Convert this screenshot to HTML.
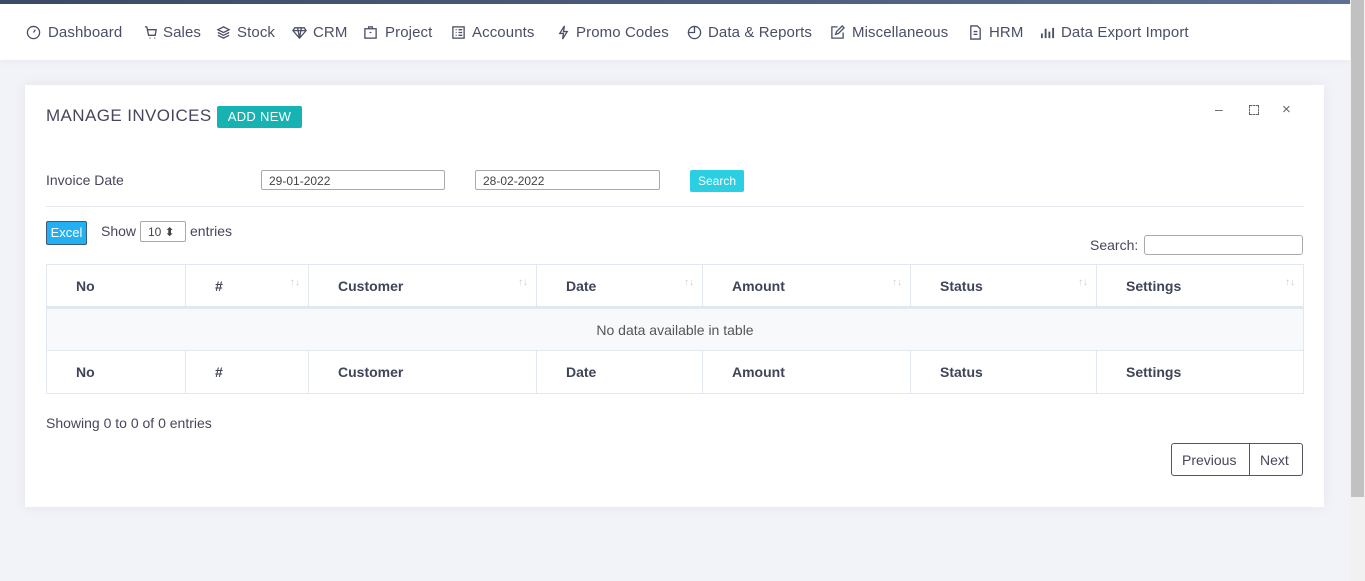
<!DOCTYPE html>
<html><head><style>
*{box-sizing:border-box;margin:0;padding:0}
body{width:1365px;height:581px;overflow:hidden;background:#f2f3f8;font-family:"Liberation Sans",sans-serif;color:#48465b;position:relative}
.top{position:absolute;left:0;top:0;width:1350px;height:4px;background:linear-gradient(90deg,#3d4a63,#5e6f94)}
.nav{position:absolute;left:0;top:4px;width:1350px;height:56px;background:#fff;box-shadow:0 2px 8px rgba(0,0,0,.04)}
.nav span{position:absolute;top:20px;font-size:15px;letter-spacing:.1px;color:#4a4f66;white-space:nowrap}
.nav svg{position:absolute;top:21px;width:15px;height:15px;fill:none;stroke:#4a4f66;stroke-width:1.4}
.sb{position:absolute;left:1350px;top:0;width:15px;height:581px;background:#f1f1f1}
.sb div{position:absolute;left:1px;top:0;width:13px;height:497px;background:#c1c1c1}
.card{position:absolute;left:25px;top:85px;width:1299px;height:422px;background:#fff;box-shadow:0 0 12px rgba(80,80,120,.08)}
.abs{position:absolute;white-space:nowrap}
.inp{position:absolute;height:20px;border:1px solid #a9a9a9;border-radius:2px;font-size:12px;padding:3px 7px;color:#444}
table{position:absolute;left:21px;top:179px;width:1258px;border-collapse:collapse;font-size:14px}
td{border:1px solid #e2e8f0;height:43px;font-weight:bold;color:#3f4458;padding-left:29px;position:relative}
.ar{position:absolute;right:8px;top:12px;font-size:10px;color:#c8ccd4;font-weight:normal}
</style></head><body>
<div class="top"></div>
<div class="nav">
<svg style="left:26px" viewBox="0 0 16 16"><circle cx="8" cy="8" r="6.5"/><path d="M8 8l2-3"/></svg><span style="left:48px">Dashboard</span>
<svg style="left:143px" viewBox="0 0 16 16"><path d="M2 2h2l2 9h7l1-6H5M7 14h1M12 14h1"/></svg><span style="left:163px">Sales</span>
<svg style="left:216px" viewBox="0 0 16 16"><path d="M8 2l6 3-6 3-6-3zM2 8l6 3 6-3M2 11l6 3 6-3"/></svg><span style="left:237px">Stock</span>
<svg style="left:292px" viewBox="0 0 16 16"><path d="M3 3h10l2 3-7 8-7-8zM1 6h14M6 3l2 11M10 3l-2 11"/></svg><span style="left:313px">CRM</span>
<svg style="left:363px" viewBox="0 0 16 16"><rect x="2" y="4" width="12" height="10"/><path d="M6 4V2h4v2M7 8h2"/></svg><span style="left:385px">Project</span>
<svg style="left:451px" viewBox="0 0 16 16"><rect x="2" y="2" width="12" height="12"/><path d="M5 5h1M8 5h4M5 8h1M8 8h4M5 11h1M8 11h4"/></svg><span style="left:472px">Accounts</span>
<svg style="left:556px" viewBox="0 0 16 16"><path d="M9 1L4 9h4l-1 6 5-8H8z"/></svg><span style="left:576px">Promo Codes</span>
<svg style="left:687px" viewBox="0 0 16 16"><circle cx="8" cy="8" r="6.5"/><path d="M8 1.5V8H2"/></svg><span style="left:708px">Data &amp; Reports</span>
<svg style="left:830px" viewBox="0 0 16 16"><path d="M8 2H2v12h12V8M6 10l1-3 6-6 2 2-6 6z"/></svg><span style="left:852px">Miscellaneous</span>
<svg style="left:968px" viewBox="0 0 16 16"><path d="M3 1h7l3 3v11H3zM6 7h4M6 10h4"/></svg><span style="left:989px">HRM</span>
<svg style="left:1040px" viewBox="0 0 16 16"><path d="M2 14V9M6 14V4M10 14V7M14 14V3" stroke-width="2"/></svg><span style="left:1061px">Data Export Import</span>
</div>
<div class="sb"><div></div></div>
<div class="card">
<div class="abs" style="left:21px;top:21px;font-size:17px;letter-spacing:.4px;color:#48465b">MANAGE INVOICES</div>
<div class="abs" style="left:192px;top:21px;width:85px;height:22px;background:#17b3b3;border-radius:2px;color:#fff;font-size:13px;text-align:center;line-height:22px;letter-spacing:.3px">ADD NEW</div>
<div class="abs" style="left:1190px;top:16px;color:#666;font-size:14px">–</div>
<div class="abs" style="left:1224px;top:20px;width:10px;height:10px;border:1.5px dashed #666"></div>
<div class="abs" style="left:1257px;top:16px;color:#666;font-size:15px">×</div>
<div class="abs" style="left:21px;top:87px;font-size:14px">Invoice Date</div>
<div class="inp" style="left:236px;top:85px;width:184px">29-01-2022</div>
<div class="inp" style="left:450px;top:85px;width:185px">28-02-2022</div>
<div class="abs" style="left:665px;top:85px;width:54px;height:22px;background:#2ccfe2;border-radius:2px;color:#fff;font-size:12px;text-align:center;line-height:22px">Search</div>
<div class="abs" style="left:21px;top:121px;width:1258px;height:1px;background:#e6e8ee"></div>
<div class="abs" style="left:21px;top:136px;width:41px;height:24px;background:#22b0f2;border:1px solid #3a5a7a;border-radius:2px;color:#fff;font-size:13px;text-align:center;line-height:22px">Excel</div>
<div class="abs" style="left:76px;top:138px;font-size:14px">Show</div>
<div class="inp" style="left:115px;top:136px;width:46px;height:21px">10 ⬍</div>
<div class="abs" style="left:165px;top:138px;font-size:14px">entries</div>
<div class="abs" style="left:1065px;top:152px;font-size:14px">Search:</div>
<div class="inp" style="left:1119px;top:150px;width:159px;height:20px;border-color:#aaa;border-radius:3px"></div>
<table>
<tr style="border-bottom:3px solid #e2e8f0"><td style="width:139px">No</td><td style="width:123px">#<span class="ar">↑↓</span></td><td style="width:228px">Customer<span class="ar">↑↓</span></td><td style="width:166px">Date<span class="ar">↑↓</span></td><td style="width:208px">Amount<span class="ar">↑↓</span></td><td style="width:186px">Status<span class="ar">↑↓</span></td><td>Settings<span class="ar">↑↓</span></td></tr>
<tr><td colspan="7" style="background:#f8f9fb;text-align:center;font-weight:normal;padding:0;color:#555">No data available in table</td></tr>
<tr><td>No</td><td>#</td><td>Customer</td><td>Date</td><td>Amount</td><td>Status</td><td>Settings</td></tr>
</table>
<div class="abs" style="left:21px;top:330px;font-size:14px">Showing 0 to 0 of 0 entries</div>
<div class="abs" style="left:1146px;top:358px;width:132px;height:33px;border:1px solid #556;border-radius:3px;font-size:14px">
<span style="position:absolute;left:10px;top:8px">Previous</span>
<span style="position:absolute;left:77px;top:0;width:1px;height:31px;background:#556"></span>
<span style="position:absolute;left:88px;top:8px">Next</span></div>
</div>
</body></html>
